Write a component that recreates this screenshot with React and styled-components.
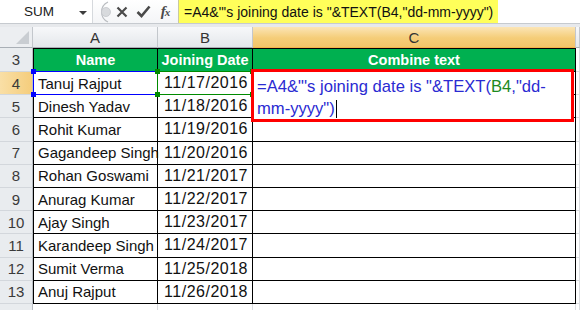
import React from 'react';
import styled, { createGlobalStyle, css } from 'styled-components';

const GlobalStyle = createGlobalStyle`
  html, body {
    margin: 0;
    padding: 0;
    background: #ffffff;
  }
  body {
    font-family: "Liberation Sans", Arial, sans-serif;
    width: 580px;
    height: 310px;
    overflow: hidden;
  }
`;

const ROW_H = 23.2;

const rows = [
  { n: 4, name: 'Tanuj Rajput', date: '11/17/2016' },
  { n: 5, name: 'Dinesh Yadav', date: '11/18/2016' },
  { n: 6, name: 'Rohit Kumar', date: '11/19/2016' },
  { n: 7, name: 'Gagandeep Singh', date: '11/20/2016' },
  { n: 8, name: 'Rohan Goswami', date: '11/21/2017' },
  { n: 9, name: 'Anurag Kumar', date: '11/22/2017' },
  { n: 10, name: 'Ajay Singh', date: '11/23/2017' },
  { n: 11, name: 'Karandeep Singh', date: '11/24/2017' },
  { n: 12, name: 'Sumit Verma', date: '11/25/2018' },
  { n: 13, name: 'Anuj Rajput', date: '11/26/2018' },
];

/* ---------- formula bar ---------- */

const FormulaBar = styled.div`
  display: flex;
  height: 24px;
  box-sizing: border-box;
  border-bottom: 1px solid #c6cacf;
  background: #ffffff;
`;

const NameBox = styled.div`
  width: 93px;
  box-sizing: border-box;
  display: flex;
  align-items: center;
  padding-left: 24px;
  position: relative;
  font-size: 13.5px;
  color: #1a1a1a;
  border-right: 1px solid #d6d9dd;
`;

const DropArrow = styled.span`
  position: absolute;
  right: 5px;
  top: 11px;
  width: 0;
  height: 0;
  border-left: 4px solid transparent;
  border-right: 4px solid transparent;
  border-top: 4px solid #3c3c3c;
`;

const Tools = styled.div`
  width: 85px;
  display: flex;
  align-items: center;
  gap: 0;
  background: linear-gradient(#ffffff, #f4f5f7);
`;

const ToolSlot = styled.div`
  width: ${p => p.w}px;
  display: flex;
  justify-content: center;
  align-items: center;
`;

const Fx = styled.span`
  font-family: "Liberation Serif", "Times New Roman", serif;
  font-style: italic;
  font-weight: bold;
  font-size: 15px;
  color: #4a4a4a;
  letter-spacing: -1px;

  small {
    font-size: 11px;
  }
`;

const FormulaInput = styled.div`
  width: 320px;
  background: #ffff5a;
  border-left: 1px solid #c9c9a0;
  display: flex;
  align-items: center;
  padding-left: 5px;
  box-sizing: border-box;
  font-size: 14px;
  color: #111;
  white-space: nowrap;
`;

const Spacer = styled.div`
  height: 3px;
  background: #e7e9ec;
`;

/* ---------- sheet ---------- */

const Sheet = styled.div`
  display: grid;
  grid-template-columns: 33px 125px 95px 323px 1fr;
  grid-auto-rows: ${ROW_H}px;
  grid-template-rows: 21px 24px;
`;

const headerBase = css`
  box-sizing: border-box;
  display: flex;
  align-items: center;
  justify-content: center;
  color: #333;
  font-size: 15px;
`;

const Corner = styled.div`
  ${headerBase};
  position: relative;
  background: #eceef1;
  border-right: 1px solid #c3c7cc;
  border-bottom: 1px solid #a9afb6;
`;

const CornerMark = styled.span`
  position: absolute;
  right: 3px;
  bottom: 3px;
  width: 0;
  height: 0;
  border-left: 13px solid transparent;
  border-bottom: 13px solid #c9cdd2;
`;

const ColHead = styled.div`
  ${headerBase};
  border-right: 1px solid #c3c7cc;
  border-bottom: 1px solid ${p => (p.active ? '#f2b24a' : '#a9afb6')};
  background: ${p =>
    p.active
      ? 'linear-gradient(#fbe5b6, #f5cd78 55%, #f2c46a)'
      : 'linear-gradient(#f7f8fa, #e4e7eb)'};
`;

const RowHead = styled.div`
  ${headerBase};
  border-right: 1px solid #b9bec4;
  border-bottom: 1px solid #d3d7dc;
  background: ${p => (p.active ? 'linear-gradient(90deg, #f9dfa6, #f5cd7c)' : '#e9ecef')};
  color: #3a3a3a;
`;

const Cell = styled.div`
  position: relative;
  box-sizing: border-box;
  display: flex;
  align-items: center;
  white-space: nowrap;
  font-size: 15px;
  color: #111;
  border-right: 1px solid #000;
  border-bottom: 1px solid #000;
  ${p => p.first && 'border-left: 1px solid #000;'}
  ${p => p.top && 'border-top: 1px solid #000;'}
  justify-content: ${p => p.align || 'flex-start'};
  padding: 0 4px;
  ${p =>
    p.head &&
    css`
      background: #00b050;
      color: #ffffff;
      font-weight: bold;
      font-size: 14.5px;
    `}
  ${p =>
    p.num &&
    css`
      font-size: 16px;
      letter-spacing: 0.5px;
      padding-right: 4px;
    `}
`;

const BlankCell = styled.div`
  box-sizing: border-box;
  border-right: 1px solid #dadcdf;
  border-bottom: 1px solid #dadcdf;
`;

const RefBox = styled.div`
  position: absolute;
  left: -1px;
  top: -1px;
  right: -1px;
  bottom: -1px;
  border: 1px solid ${p => p.color};
  pointer-events: none;
  z-index: 2;
`;

const Handle = styled.span`
  position: absolute;
  width: 5px;
  height: 5px;
  background: ${p => p.color};
  ${p => (p.y === 'top' ? 'top: -3px;' : 'bottom: -3px;')}
  ${p => (p.x === 'left' ? 'left: -3px;' : 'right: -3px;')}
`;

const Editor = styled.div`
  position: absolute;
  left: -2px;
  top: -3px;
  width: 323px;
  height: 53px;
  box-sizing: border-box;
  border: 3px solid #ff0000;
  background: #ffffff;
  z-index: 3;
  padding: 4px 0 0 3px;
  font-size: 16.6px;
  line-height: 22px;
  color: #2a2ad2;
  white-space: nowrap;
`;

const RefText = styled.span`
  color: #1e8a1e;
`;

const Caret = styled.span`
  display: inline-block;
  width: 1px;
  height: 18px;
  background: #000;
  vertical-align: -4px;
  margin-left: 1px;
`;

const RefMark = ({ color }) => (
  <RefBox color={color}>
    <Handle color={color} x="left" y="top" />
    <Handle color={color} x="right" y="top" />
    <Handle color={color} x="left" y="bottom" />
    <Handle color={color} x="right" y="bottom" />
  </RefBox>
);

const Grip = () => (
  <svg width="16" height="22" viewBox="0 0 16 22">
    <path d="M13 1 A11 11 0 0 0 13 21" fill="none" stroke="#b9bcc0" strokeWidth="1.2" />
    <circle cx="11" cy="11" r="4.5" fill="#d8dadd" stroke="#c4c7cb" strokeWidth="0.8" />
  </svg>
);

const CancelIcon = () => (
  <svg width="12" height="12" viewBox="0 0 12 12">
    <path d="M1.5 1.5 L10.5 10.5 M10.5 1.5 L1.5 10.5" stroke="#4a4a4a" strokeWidth="2.2" />
  </svg>
);

const EnterIcon = () => (
  <svg width="15" height="13" viewBox="0 0 15 13">
    <path d="M1.5 7 L5.5 11 L13.5 1.5" fill="none" stroke="#4a4a4a" strokeWidth="2.6" />
  </svg>
);

const App = () => {
  return (
    <>
      <GlobalStyle />
      <FormulaBar>
        <NameBox>
          SUM
          <DropArrow />
        </NameBox>
        <Tools>
          <ToolSlot w={20}>
            <Grip />
          </ToolSlot>
          <ToolSlot w={18}>
            <CancelIcon />
          </ToolSlot>
          <ToolSlot w={24}>
            <EnterIcon />
          </ToolSlot>
          <ToolSlot w={20}>
            <Fx>
              f<small>x</small>
            </Fx>
          </ToolSlot>
        </Tools>
        <FormulaInput>=A4&amp;"'s joining date is "&amp;TEXT(B4,"dd-mm-yyyy")</FormulaInput>
      </FormulaBar>
      <Spacer />

      <Sheet>
        <Corner>
          <CornerMark />
        </Corner>
        <ColHead>A</ColHead>
        <ColHead>B</ColHead>
        <ColHead active>C</ColHead>
        <ColHead />

        <RowHead>3</RowHead>
        <Cell head first top align="center">
          Name
        </Cell>
        <Cell head top align="center">
          Joining Date
        </Cell>
        <Cell head top align="center">
          Combine text
        </Cell>
        <BlankCell />

        {rows.map(r => (
          <React.Fragment key={r.n}>
            <RowHead active={r.n === 4}>{r.n}</RowHead>
            <Cell first>
              {r.name}
              {r.n === 4 && <RefMark color="#0000ff" />}
            </Cell>
            <Cell num align="flex-end">
              {r.date}
              {r.n === 4 && <RefMark color="#008a00" />}
            </Cell>
            <Cell>
              {r.n === 4 && (
                <Editor>
                  =A4&amp;"'s joining date is "&amp;TEXT(<RefText>B4</RefText>,"dd-
                  <br />
                  mm-yyyy")
                  <Caret />
                </Editor>
              )}
            </Cell>
            <BlankCell />
          </React.Fragment>
        ))}

        <RowHead>14</RowHead>
        <BlankCell />
        <BlankCell />
        <BlankCell />
        <BlankCell />
      </Sheet>
    </>
  );
};

export default App;
